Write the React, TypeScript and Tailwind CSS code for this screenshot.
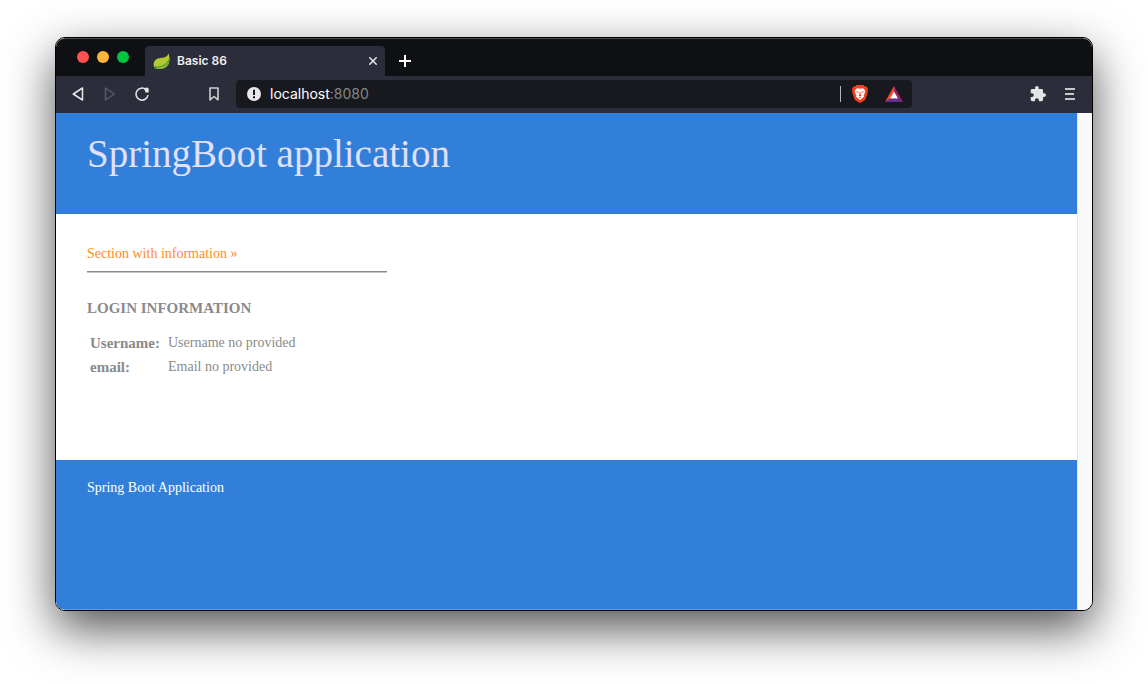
import React from "react";

function IconButton({ label, className = "", children }: { label: string; className?: string; children: React.ReactNode }) {
  return (
    <button type="button" aria-label={label} className={`flex h-7 w-8 shrink-0 items-center justify-center ${className}`}>
      {children}
    </button>
  );
}

function LeafIcon() {
  return (
    <svg width="17" height="17" viewBox="0 0 17 17" aria-hidden="true" className="shrink-0">
      <path d="M15.6 .6C17 5 17.200 10 14.2 13.2C11.5 16.3 6 16.2 2.5 15.600C.6 14.200 .2 11 1.200 8.800C3 5.200 6.500 5 9.800 4.800C12.500 4.500 14.400 3.200 15.600 .6Z" fill="#b4c932" />
      <path d="M16 6C16.200 9.500 15.400 12 13.400 13.800C10.600 16.2 6 16.1 2.5 15.6L1.500 13.600C8 14 13 11.600 16 6Z" fill="#4c9a35" />
      <path d="M3.500 14.800C8.500 14.800 12.400 13 15.200 9.200C14 13.400 9.800 16 3.500 15.600Z" fill="#b4c932" />
      <circle cx="2.5" cy="14.4" r="1" fill="#3d7f2f" />
    </svg>
  );
}

function LionIcon() {
  return (
    <svg width="16" height="18" viewBox="0 0 16 18" aria-hidden="true">
      <path d="M4.6 0H11.4L12.8 1.6L14.4 1.5L16 3.6L15.5 5.2L15.9 6.4L13.8 13.6C13.3 15 12.3 15.8 8 18C3.7 15.8 2.7 15 2.2 13.6L.1 6.4L.5 5.2L0 3.6L1.6 1.5L3.2 1.6Z" fill="#f4401f" />
      <path d="M5 3.2L8 3.8L11 3.2L13.2 5.7L12.6 8.4L11.6 10.3L12 11.6L10.6 13L8 15L5.4 13L4 11.6L4.4 10.3L3.4 8.4L2.8 5.7Z" fill="#fff" />
      <path d="M4.2 6.2L6.8 6.9L6.3 7.8L4.6 7.3ZM11.8 6.2L9.2 6.9L9.7 7.8L11.4 7.3ZM7.4 7.4H8.6L8.7 9.8L9.6 10.5L8 11.4L6.4 10.5L7.3 9.8ZM6.4 12.3L8 12L9.6 12.3L8 13.2Z" fill="#f4401f" />
    </svg>
  );
}

function TriangleIcon() {
  return (
    <svg width="18" height="16" viewBox="0 0 18 16" aria-hidden="true">
      <path d="M9 0L0 16L5 13L9 6Z" fill="#ff4724" />
      <path d="M9 0L18 16L13 13L9 6Z" fill="#9e1f63" />
      <path d="M0 16H18L13 12.500H5Z" fill="#662d91" />
      <path d="M9 5.5L5 12.500H13Z" fill="#fff" />
    </svg>
  );
}

function TabStrip() {
  return (
    <div className="flex h-[38px] shrink-0 items-end rounded-t-[9px] border-t border-[#4b4c50] bg-[#0f1014]">
      <div className="flex w-[89px] items-center gap-2 self-stretch pb-0.5 pl-[21px]">
        <button type="button" aria-label="Close window" className="size-3 rounded-full bg-[#ff5350]" />
        <button type="button" aria-label="Minimize window" className="size-3 rounded-full bg-[#ffb43c]" />
        <button type="button" aria-label="Zoom window" className="size-3 rounded-full bg-[#00c543]" />
      </div>
      <div className="flex h-[30px] w-60 items-center gap-[7px] rounded-t bg-[#2b2e3a] pr-1 pl-2">
        <LeafIcon />
        <span className="flex-1 text-xs font-semibold text-[#f0f0f2]">Basic 86</span>
        <button type="button" aria-label="Close tab" className="flex size-4 items-center justify-center">
          <svg width="8" height="8" viewBox="0 0 8 8" fill="none" stroke="#e8e8ea" strokeWidth="1.5" aria-hidden="true">
            <path d="M.3 .3L7.700 7.700M7.700 .3L.3 7.700" />
          </svg>
        </button>
      </div>
      <button type="button" aria-label="New tab" className="flex h-[30px] w-10 items-center justify-center">
        <svg width="12" height="12" viewBox="0 0 12 12" fill="none" stroke="#fff" strokeWidth="2" aria-hidden="true">
          <path d="M6 0V12M0 6H12" />
        </svg>
      </button>
    </div>
  );
}

function Toolbar() {
  return (
    <div className="flex h-[37px] shrink-0 items-center bg-[#2b2e3a] px-1.5 pb-px">
      <IconButton label="Back">
        <svg width="12" height="14" viewBox="0 0 12 14" fill="none" stroke="#e6e7e9" strokeWidth="1.5" strokeLinejoin="round" aria-hidden="true">
          <path d="M10.5 1V13L1.3 7Z" />
        </svg>
      </IconButton>
      <IconButton label="Forward">
        <svg width="12" height="14" viewBox="0 0 12 14" fill="none" stroke="#585b66" strokeWidth="1.5" strokeLinejoin="round" aria-hidden="true">
          <path d="M1.5 1V13L10.3 7Z" />
        </svg>
      </IconButton>
      <IconButton label="Reload" className="mr-10">
        <svg width="14" height="14" viewBox="0 0 14 14" fill="none" aria-hidden="true">
          <path d="M11 2.6A6 6 0 1 0 13 8" stroke="#e6e7e9" strokeWidth="1.5" />
          <path d="M9.4 2A2.300 2.300 0 0 1 13.700 1.800V5.500H10.500Z" fill="#e6e7e9" />
        </svg>
      </IconButton>
      <IconButton label="Bookmark this page" className="mr-1.5">
        <svg width="10" height="14" viewBox="0 0 10 14" fill="none" stroke="#cfd0d3" strokeWidth="1.6" strokeLinejoin="round" aria-hidden="true">
          <path d="M1 1H9V12.8L5 9.5L1 12.8Z" />
        </svg>
      </IconButton>
      <div className="flex h-7 min-w-0 flex-1 items-center rounded bg-[#18191e] pr-[9px] pl-[11px]">
        <svg width="14" height="14" viewBox="0 0 14 14" aria-hidden="true" className="mr-[9px] shrink-0">
          <circle cx="7" cy="7" r="7" fill="#e8e8ea" />
          <path d="M6 2.8H8V8H6ZM6 9.2H8V11.2H6Z" fill="#18191e" />
        </svg>
        <a href="#" className="flex-1 truncate text-sm text-white">
          localhost<span className="text-[#85868a]">:8080</span>
        </a>
        <span className="mr-[11px] h-4 w-px bg-[#b5b6b9]" />
        <button type="button" aria-label="Shields" className="mr-[17px]"><LionIcon /></button>
        <button type="button" aria-label="Rewards"><TriangleIcon /></button>
      </div>
      <IconButton label="Extensions" className="ml-[110px]">
        <svg width="16" height="16" viewBox="1 1 22 22" fill="#e4e5e7" aria-hidden="true">
          <path d="M20.5 11H19V7c0-1.1-.9-2-2-2h-4V3.500a2.500 2.500 0 0 0-5 0V5H4c-1.100 0-2 .9-2 2v3.800h1.500a2.700 2.700 0 0 1 0 5.400H2V20c0 1.100.9 2 2 2h3.800v-1.500a2.700 2.700 0 0 1 5.400 0V22H17c1.100 0 2-.9 2-2v-4h1.500a2.500 2.500 0 0 0 0-5z" />
        </svg>
      </IconButton>
      <IconButton label="Menu">
        <svg width="10" height="12" viewBox="0 0 10 12" fill="#c7c8cb" aria-hidden="true">
          <path d="M0 0H10V2H0ZM0 5H9V7H0ZM0 10H10V12H0Z" />
        </svg>
      </IconButton>
    </div>
  );
}

export default function App() {
  return (
    <div className="flex min-h-screen flex-col bg-white px-[55px] pt-[37px] pb-[73px] font-['Inter',sans-serif]">
      <div className="flex flex-1 flex-col overflow-hidden rounded-[10px] border border-black bg-[#f9f9f9] shadow-[0_18px_48px_rgba(0,0,0,0.68)]">
        <TabStrip />
        <Toolbar />
        <div className="flex flex-1">
          <div className="flex flex-1 flex-col border-b border-[#5a9be6] bg-white font-['Liberation_Serif',serif] text-sm text-[#8a8a8a]">
            <header className="h-[101px] bg-[#327fd9] px-[31px] pt-4">
              <h1 className="text-[39px] leading-[50px] text-[#e0e0ff]">SpringBoot application</h1>
            </header>
            <main className="h-[246px] px-[31px] pt-7">
              <a href="#" className="block leading-6 text-[#ff8c1a]">Section with information »</a>
              <hr className="mt-[5px] h-0.5 w-[300px] border-t border-b border-t-[#8c8c8c] border-b-[#c4c4c4]" />
              <h2 className="mt-[23px] text-[15px] leading-6 font-bold">LOGIN INFORMATION</h2>
              <table className="mt-[11px] text-left">
                <tbody className="leading-6">
                  <tr>
                    <th scope="row" className="w-[81px] pl-[3px] text-[15px] leading-6 font-bold">Username:</th>
                    <td>Username no provided</td>
                  </tr>
                  <tr>
                    <th scope="row" className="pl-[3px] text-[15px] leading-6 font-bold">email:</th>
                    <td>Email no provided</td>
                  </tr>
                </tbody>
              </table>
            </main>
            <footer className="flex-1 bg-[#327fd9] px-[31px] pt-4 leading-6 text-white">Spring Boot Application</footer>
          </div>
          <div className="w-[15px] border-l border-[#e6e6e6] bg-[#f9f9f9]" />
        </div>
      </div>
    </div>
  );
}
